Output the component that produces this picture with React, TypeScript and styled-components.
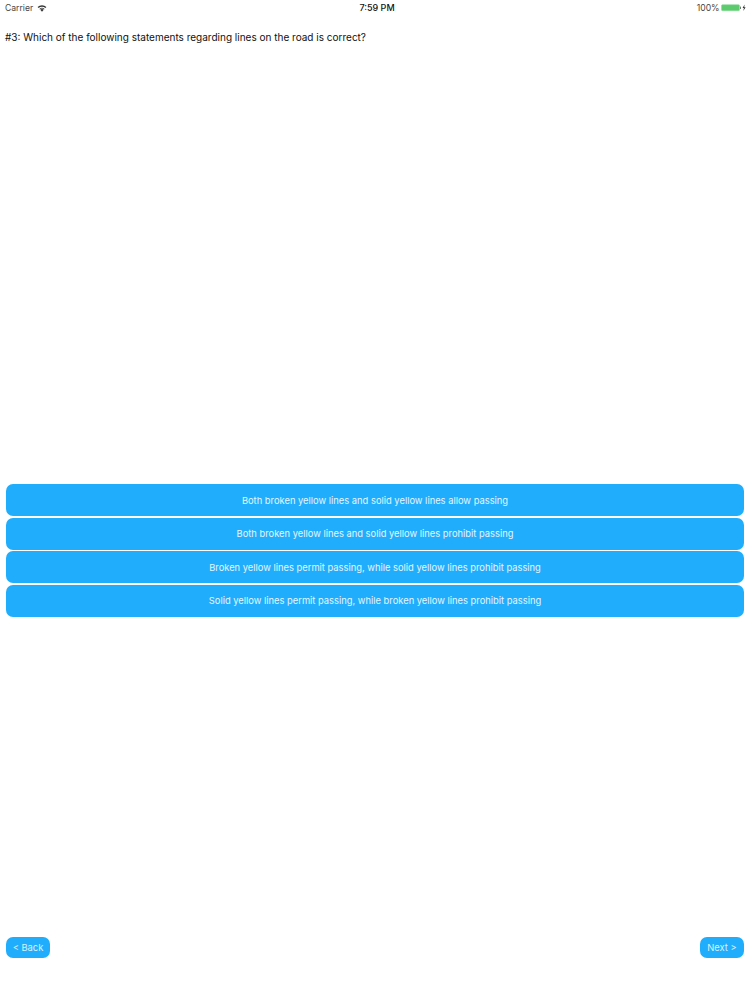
import styled, { createGlobalStyle } from 'styled-components';

const GlobalStyle = createGlobalStyle`
  html, body {
    margin: 0;
    padding: 0;
    background: #fff;
  }
  body {
    font-family: Inter, "Liberation Sans", sans-serif;
  }
`;

const Page = styled.div`
  display: flex;
  flex-direction: column;
  width: 750px;
  height: 1000px;
  overflow: hidden;
  background: #fff;
`;

const StatusBar = styled.div`
  display: grid;
  grid-template-columns: 1fr auto 1fr;
  align-items: center;
  height: 15px;
  padding: 0 4px 0 5px;
  font-size: 8.6px;
  color: #222;
`;

const Carrier = styled.div`
  display: flex;
  align-items: center;
  gap: 4px;
  color: #444;
`;

const Clock = styled.div`
  margin-left: 3px;
  font-size: 9px;
  font-weight: 500;
  color: #111;
`;

const BatteryGroup = styled.div`
  display: flex;
  align-items: center;
  justify-content: flex-end;
  gap: 1.5px;
  color: #444;
`;

const Question = styled.div`
  margin: 15px 0 0 5px;
  height: 14px;
  line-height: 14px;
  font-size: 10px;
  color: #111;
`;

const Answers = styled.div`
  display: flex;
  flex-direction: column;
  gap: 1.67px;
  margin: 440px 6px 0;
`;

const AnswerButton = styled.button`
  height: 32px;
  padding: 0;
  border: 0;
  border-radius: 7px;
  background: #20aefc;
  color: #e4f5ff;
  font-family: inherit;
  font-size: 9.35px;
`;

const Nav = styled.div`
  display: flex;
  justify-content: space-between;
  margin: auto 6px 0;
  padding-bottom: 42px;
`;

const NavButton = styled.button`
  width: 44px;
  height: 21px;
  padding: 0;
  border: 0;
  border-radius: 7px;
  background: #20aefc;
  color: #d8f1ff;
  font-family: inherit;
  font-size: 9.4px;
`;

const WifiIcon = () => (
  <svg width="10" height="8" viewBox="0 0 10 8">
    <path d="M5 7.8 L3.3 5.8 A2.5 2.5 0 0 1 6.7 5.8 Z" fill="#333" />
    <path d="M2.4 4.9 A3.9 3.9 0 0 1 7.6 4.9 L7 5.5 A3 3 0 0 0 3 5.5 Z" fill="#333" />
    <path d="M0.6 3 A6.2 6.2 0 0 1 9.4 3 L8.4 4 A4.9 4.9 0 0 0 1.6 4 Z" fill="#333" />
  </svg>
);

const BatteryIcon = () => (
  <svg width="25" height="8" viewBox="0 0 25 8">
    <rect x="0.5" y="0.7" width="18" height="6" rx="1" fill="#5ccb6e" stroke="#8ad89a" strokeWidth="0.6" />
    <rect x="19" y="2.6" width="1" height="2.4" fill="#777" />
    <path d="M23.6 0.6 L21.6 4 H22.9 L22.3 7 L24.6 3.2 H23.2 Z" fill="#333" />
  </svg>
);

const answers = [
  'Both broken yellow lines and solid yellow lines allow passing',
  'Both broken yellow lines and solid yellow lines prohibit passing',
  'Broken yellow lines permit passing, while solid yellow lines prohibit passing',
  'Solid yellow lines permit passing, while broken yellow lines prohibit passing',
];

const App = () => (
  <Page>
    <GlobalStyle />
    <StatusBar>
      <Carrier>
        Carrier
        <WifiIcon />
      </Carrier>
      <Clock>7:59 PM</Clock>
      <BatteryGroup>
        100%
        <BatteryIcon />
      </BatteryGroup>
    </StatusBar>
    <Question>#3: Which of the following statements regarding lines on the road is correct?</Question>
    <Answers>
      {answers.map((text) => (
        <AnswerButton key={text}>{text}</AnswerButton>
      ))}
    </Answers>
    <Nav>
      <NavButton>&lt; Back</NavButton>
      <NavButton>Next &gt;</NavButton>
    </Nav>
  </Page>
);

export default App;
